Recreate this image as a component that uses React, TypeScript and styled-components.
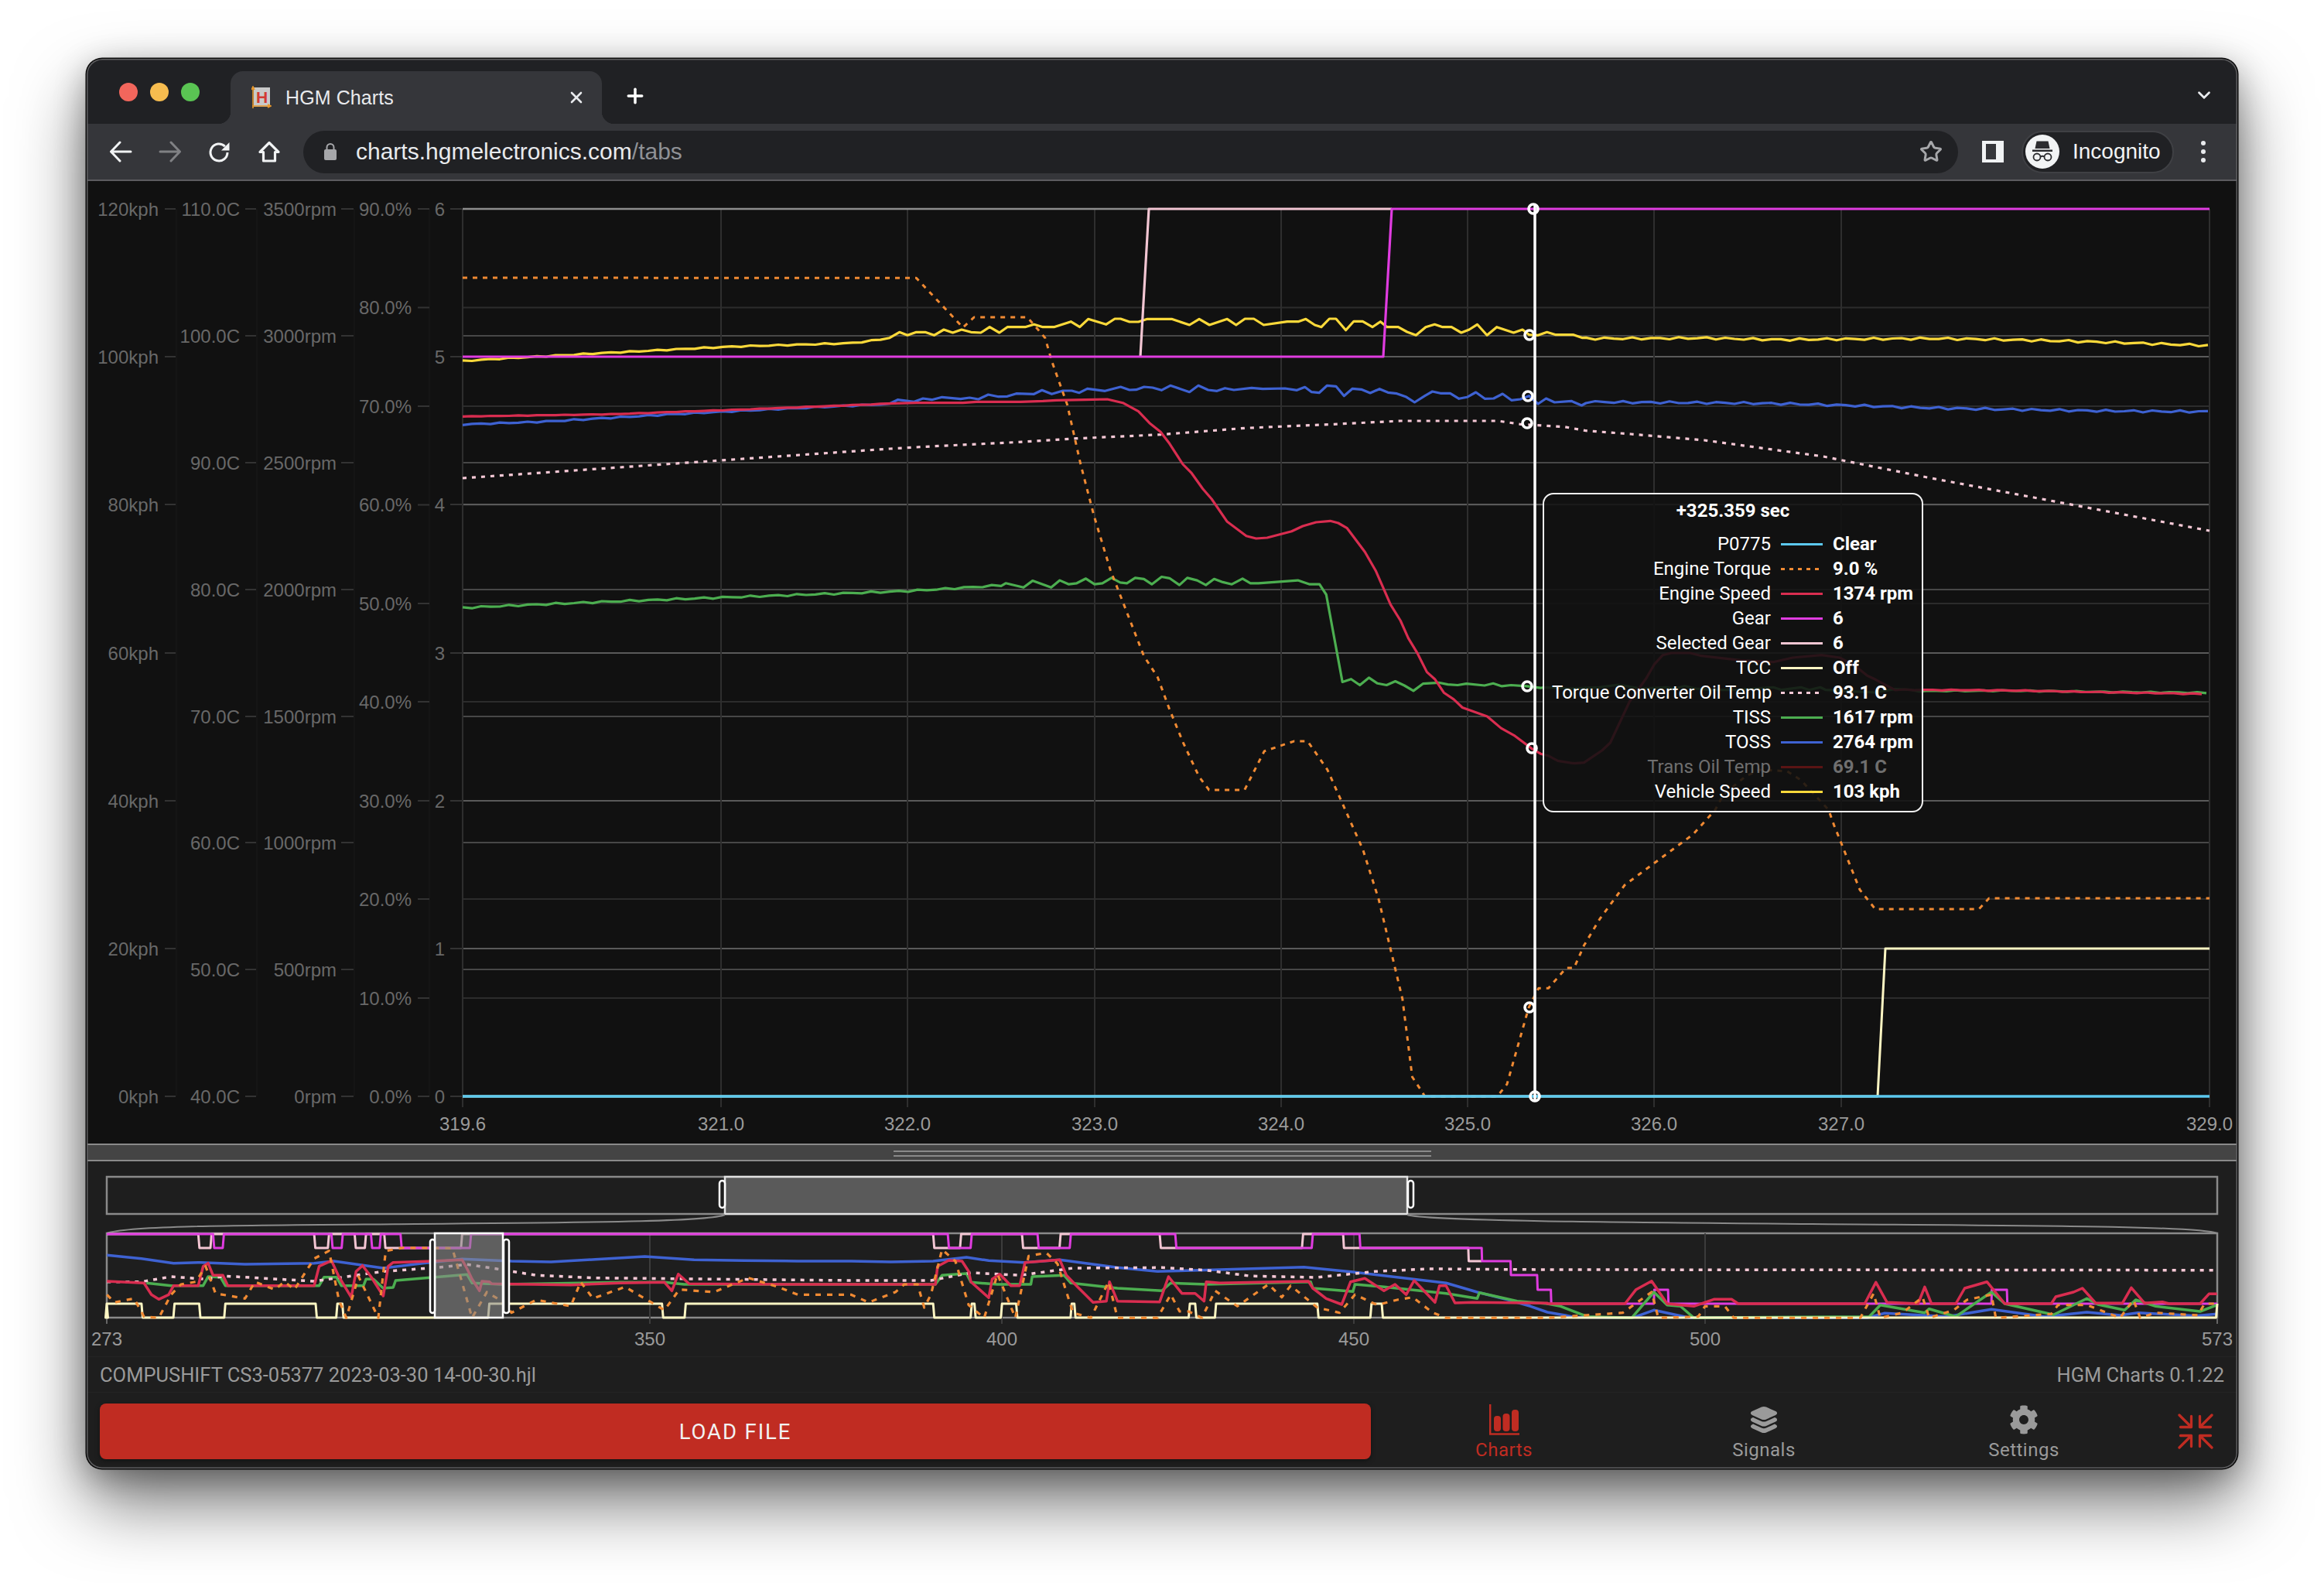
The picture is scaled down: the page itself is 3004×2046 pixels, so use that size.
import React from 'react'
import styled, { createGlobalStyle } from 'styled-components'
import { ChevronDown, Plus, Star, X } from 'lucide-react'
import { FaCog } from 'react-icons/fa'
import { IoLayers } from 'react-icons/io5'

type Pt = number[]

const COLORS = {
  p0775: '#5cc8ee',
  torque: '#f08a33',
  engine: '#d92d50',
  gear: '#e03ce0',
  selected: '#f3c6d3',
  tcc: '#fdf6c3',
  oilTemp: '#f6c9d6',
  tiss: '#4cae50',
  toss: '#3e62d2',
  trans: '#5a1414',
  speed: '#fbd93a',
  red: '#c02c22'
}

const GlobalStyle = createGlobalStyle`
  html, body {
    margin: 0;
    background: #fff;
  }
  body {
    width: 3004px;
    height: 2046px;
    overflow: hidden;
    font-family: Roboto, sans-serif;
  }
`

const Page = styled.div`
  padding: 76px 0 0 112px;
`

const Window = styled.div`
  position: relative;
  width: 2780px;
  height: 1822px;
  display: flex;
  flex-direction: column;
  border-radius: 20px;
  overflow: hidden;
  background: #1e1e1e;
  box-shadow: 0 0 0 1.5px #0a0a0a, 0 44px 90px rgba(0, 0, 0, 0.55), 0 10px 40px rgba(0, 0, 0, 0.3);

  &::after {
    content: '';
    position: absolute;
    inset: 0;
    border-radius: 20px;
    box-shadow: inset 0 0 0 1.5px #5e5e60;
    pointer-events: none;
  }
`

const TabStrip = styled.div`
  height: 84px;
  flex: none;
  display: flex;
  align-items: flex-end;
  padding: 0 32px 0 42px;
  background: #202124;
`

const Lights = styled.div`
  display: flex;
  gap: 16px;
  align-self: flex-start;
  margin: 31px 40px 0 0;
`

const Light = styled.span<{ $color: string }>`
  width: 24px;
  height: 24px;
  border-radius: 50%;
  background: ${(p) => p.$color};
`

const Tab = styled.div`
  position: relative;
  width: 480px;
  height: 68px;
  display: flex;
  align-items: center;
  padding: 0 21px 0 27px;
  box-sizing: border-box;
  border-radius: 16px 16px 0 0;
  background: #35363a;
  color: #e8eaed;

  &::before,
  &::after {
    content: '';
    position: absolute;
    bottom: 0;
    width: 16px;
    height: 16px;
  }
  &::before {
    left: -16px;
    background: radial-gradient(circle at 0 0, transparent 16px, #35363a 16.5px);
  }
  &::after {
    right: -16px;
    background: radial-gradient(circle at 100% 0, transparent 16px, #35363a 16.5px);
  }
`

const TabTitle = styled.span`
  margin-left: 18px;
  font: 25px 'Liberation Sans', sans-serif;
  letter-spacing: 0.1px;
`

const TabClose = styled.span`
  margin-left: auto;
  display: flex;
`

const NewTab = styled.span`
  display: flex;
  align-self: center;
  margin: 12px 0 0 28px;
  color: #fff;
`

const TabMenu = styled.span`
  display: flex;
  align-self: center;
  margin: 10px -2px 0 auto;
  color: #e8eaed;
`

const Toolbar = styled.div`
  height: 74px;
  flex: none;
  display: flex;
  align-items: center;
  box-sizing: border-box;
  padding-left: 28px;
  background: #35363a;
  border-bottom: 2px solid #5c5c60;
`

const NavButton = styled.span<{ $dim?: boolean }>`
  width: 32px;
  height: 32px;
  margin-right: 32px;
  display: flex;
  align-items: center;
  justify-content: center;
  color: ${(p) => (p.$dim ? '#808184' : '#f1f3f4')};
`

const UrlPill = styled.div`
  width: 2139px;
  height: 55px;
  margin-left: -4px;
  flex: none;
  display: flex;
  align-items: center;
  box-sizing: border-box;
  padding: 0 20px 0 27px;
  border-radius: 28px;
  background: #202124;
`

const UrlText = styled.span`
  margin-left: 25px;
  font: 30px 'Liberation Sans', sans-serif;
  color: #e8eaed;
  em {
    font-style: normal;
    color: #8f9196;
  }
`

const UrlStar = styled.span`
  margin-left: auto;
  display: flex;
  color: #a6a7aa;
`

const SidePanel = styled.span`
  width: 28px;
  height: 28px;
  margin-left: 31px;
  box-sizing: border-box;
  border: solid #f1f3f4;
  border-width: 4px 10px 4px 5px;
  background: #35363a;
`

const Profile = styled.div`
  width: 197px;
  height: 55px;
  margin-left: 23px;
  display: flex;
  align-items: center;
  box-sizing: border-box;
  padding-left: 3px;
  border: 2px solid #3f4044;
  border-radius: 28px;
  background: #202124;
  color: #f1f3f4;
  font: 28px 'Liberation Sans', sans-serif;
`

const Avatar = styled.span`
  width: 44px;
  height: 44px;
  margin-right: 17px;
  flex: none;
  display: flex;
  border-radius: 50%;
  background: #f1f3f4;
`

const Kebab = styled.span`
  margin-left: 34px;
  display: flex;
`

const ChartPanel = styled.div`
  position: relative;
  height: 1244px;
  flex: none;
  background: #111;
  font-family: 'Liberation Sans', sans-serif;
`

const Drawing = styled.svg`
  display: block;
`

const AxisLabel = styled.text<{ $light?: boolean }>`
  font: 24px 'Liberation Sans', sans-serif;
  fill: ${(p) => (p.$light ? '#9a9a9a' : '#686868')};
`

const Tooltip = styled.div`
  position: absolute;
  left: 1882px;
  top: 403px;
  width: 492px;
  height: 413px;
  box-sizing: border-box;
  padding: 5px 0 0 10px;
  border: 2px solid #f2f2f2;
  border-radius: 14px;
  background: rgba(17, 17, 17, 0.88);
  color: #fff;
  font: 24px/32px Roboto, sans-serif;
`

const TooltipTitle = styled.div`
  margin: 0 0 11px -10px;
  text-align: center;
  font-weight: 700;
`

const TooltipGrid = styled.div`
  display: grid;
  grid-template-columns: 283px 54px auto;
  column-gap: 13px;
  align-items: center;
`

const RowLabel = styled.span<{ $dim?: boolean }>`
  text-align: right;
  white-space: nowrap;
  color: ${(p) => (p.$dim ? '#6f6f6f' : '#fff')};
`

const RowValue = styled.span<{ $dim?: boolean }>`
  font-weight: 700;
  white-space: nowrap;
  color: ${(p) => (p.$dim ? '#6f6f6f' : '#fff')};
`

const Swatch = styled.span<{ $color: string; $dotted?: boolean }>`
  height: 3px;
  background: ${(p) =>
    p.$dotted ? `repeating-linear-gradient(90deg, ${p.$color} 0 5px, transparent 5px 11px)` : p.$color};
`

const Splitter = styled.div`
  height: 23px;
  flex: none;
  box-sizing: border-box;
  display: flex;
  flex-direction: column;
  align-items: center;
  padding: 7px 0 0 0;
  gap: 4px;
  background: #444;
  border-top: 2px solid #8a8a8a;
  border-bottom: 2px solid #8a8a8a;
`

const Grip = styled.span`
  width: 695px;
  height: 2px;
  background: #8a8a8a;
`

const Navigator = styled.div`
  height: 252px;
  flex: none;
  background: #1e1e1e;
`

const InfoRow = styled.div`
  height: 47px;
  flex: none;
  display: flex;
  align-items: center;
  justify-content: space-between;
  box-sizing: border-box;
  padding: 0 17px;
  border-top: 1px solid #242424;
  border-bottom: 1px solid #242424;
  color: #9a9a9a;
  font: 25.5px Roboto, sans-serif;
`

const Footer = styled.div`
  flex: 1;
  display: flex;
  padding-left: 17px;
`

const LoadButton = styled.button`
  width: 1643px;
  height: 72px;
  margin: 14px 4px 0 0;
  flex: none;
  border: 0;
  border-radius: 8px;
  background: ${COLORS.red};
  box-shadow: 0 2px 6px rgba(0, 0, 0, 0.4);
  color: #f2f2f2;
  font: 400 27.5px Roboto, sans-serif;
  letter-spacing: 1.9px;
`

const NavTab = styled.div<{ $active?: boolean }>`
  width: 336px;
  padding-top: 15px;
  display: flex;
  flex-direction: column;
  align-items: center;
  color: ${(p) => (p.$active ? COLORS.red : '#9a9a9a')};
  font: 24px/28px Roboto, sans-serif;
  letter-spacing: 0.5px;
`

const NavTabIcon = styled.span`
  height: 40px;
  margin-bottom: 5px;
  display: flex;
  align-items: center;
`

const FullscreenToggle = styled.span`
  width: 108px;
  padding-top: 27px;
  display: flex;
  justify-content: center;
  color: ${COLORS.red};
`

// crops used to trace the curves off the reference, mapped back to page pixels
const crop = (sx: number, sy: number, ox: number, oy: number) => (pts: Pt[]) =>
  pts.map(([x, y]) => [x / sx + ox, y / sy + oy])
const z3 = crop(2.8, 3, 1960, 620)
const z4 = crop(1.568, 3, 100, 1440)
const z5 = crop(1.742, 3, 1100, 1440)
const z6 = crop(1.742, 3, 2000, 1440)
const z9 = crop(1.742, 3, 1150, 240)
const z10 = crop(1.96, 2.178, 1300, 740)

const line = (pts: Pt[]) => pts.map(([x, y]) => `${x.toFixed(1)},${y.toFixed(1)}`).join(' ')

// sampled signal with a little sensor noise between anchor points
const noisy = (anchors: Pt[], amp: number, seed: number): Pt[] => {
  const out: Pt[] = []
  let seg = 0
  for (let x = anchors[0][0]; x <= anchors[anchors.length - 1][0]; x += 12) {
    while (seg < anchors.length - 2 && x > anchors[seg + 1][0]) seg++
    const [x0, y0] = anchors[seg]
    const [x1, y1] = anchors[seg + 1]
    const y = y0 + ((y1 - y0) * (x - x0)) / (x1 - x0)
    out.push([x, y + (amp * (Math.sin(x * 0.53 + seed) + Math.sin(x * 1.37 + seed * 2))) / 2])
  }
  return out
}

const speedLine = [
  ...noisy([[598, 467], [650, 464], [800, 456], [950, 448], [1100, 443], [1148, 437]], 1.6, 1),
  ...z9([
    [0, 590], [22, 568], [40, 580], [60, 568], [80, 568], [100, 580], [122, 558], [142, 570], [162, 558], [183, 568],
    [205, 570], [225, 548], [247, 570], [265, 548], [305, 548], [325, 538], [345, 548], [370, 548], [408, 527],
    [428, 548], [447, 517], [487, 538], [507, 516], [520, 516], [540, 528], [560, 528], [580, 517], [635, 517],
    [675, 540], [697, 517], [720, 540], [760, 517], [780, 540], [800, 516], [820, 516], [842, 540], [895, 527],
    [920, 527], [937, 517], [957, 540], [972, 548], [990, 516], [1005, 516], [1027, 560], [1045, 526], [1065, 526],
    [1087, 548], [1105, 527], [1120, 548], [1145, 548], [1165, 567], [1185, 580], [1207, 548], [1227, 538],
    [1245, 548], [1265, 548], [1287, 570], [1305, 558], [1323, 538], [1345, 580], [1367, 548], [1405, 570],
    [1425, 558], [1440, 578], [1460, 580], [1480, 568], [1500, 578], [1540, 578], [1560, 590]
  ]),
  ...noisy([[2050, 436], [2200, 436], [2300, 439], [2500, 439], [2680, 442], [2856, 446]], 3, 2)
]

const tossLine = [
  ...noisy([[598, 549], [700, 545], [860, 535], [1000, 528], [1148, 522]], 1.8, 3),
  ...z9([
    [0, 845], [18, 830], [55, 838], [75, 825], [95, 830], [118, 820], [160, 827], [180, 822], [200, 828], [222, 810],
    [245, 818], [265, 817], [285, 806], [325, 808], [343, 793], [365, 808], [390, 795], [410, 795], [427, 803],
    [445, 787], [485, 796], [520, 780], [540, 792], [555, 791], [573, 780], [592, 783], [612, 793], [632, 775],
    [675, 800], [695, 775], [717, 792], [737, 796], [755, 785], [775, 792], [815, 784], [840, 788], [890, 786],
    [917, 793], [935, 781], [950, 800], [967, 803], [985, 775], [1005, 778], [1023, 815], [1042, 787], [1062, 790],
    [1082, 804], [1103, 788], [1122, 802], [1142, 806], [1162, 818], [1182, 840], [1205, 815], [1222, 798],
    [1240, 805], [1262, 805], [1282, 826], [1300, 820], [1320, 801], [1340, 826], [1360, 825], [1380, 807],
    [1400, 832], [1420, 828], [1440, 815], [1460, 846], [1478, 825], [1497, 840], [1535, 835], [1558, 852]
  ]),
  ...noisy([[2050, 520], [2108, 521], [2300, 523], [2490, 527], [2856, 531]], 3, 4)
]

const engineLine = [
  ...noisy([[598, 538], [800, 535], [1000, 528], [1148, 522]], 0.6, 5),
  ...z9([
    [60, 842], [165, 842], [195, 838], [295, 838], [345, 835], [375, 832], [440, 830], [490, 828], [525, 842],
    [560, 875], [585, 920], [610, 955], [630, 1000], [660, 1080], [680, 1115], [705, 1175], [725, 1215], [760, 1303],
    [803, 1358], [825, 1368], [850, 1365], [905, 1340], [930, 1320], [960, 1305], [992, 1300], [1010, 1308],
    [1030, 1328], [1070, 1420], [1095, 1495]
  ]),
  ...z10([
    [975, 90], [1000, 135], [1020, 185], [1042, 225], [1067, 280], [1087, 300], [1110, 338], [1135, 357], [1157, 380],
    [1220, 405], [1255, 438], [1290, 460], [1332, 495], [1355, 510]
  ]),
  ...z3([
    [115, 1070], [150, 1090], [210, 1100], [245, 1097], [310, 1050], [340, 1020], [410, 860], [470, 770], [500, 715],
    [530, 680], [560, 672], [630, 672], [670, 683], [810, 700], [930, 707], [1000, 690], [1105, 680], [1170, 690],
    [1230, 725], [1270, 760], [1300, 775], [1370, 815]
  ]),
  ...noisy([[2450, 892], [2600, 893], [2720, 895], [2856, 897]], 1.2, 6)
]

const tissLine = [
  ...noisy([[598, 786], [860, 776], [1173, 763], [1300, 755]], 2.4, 7),
  ...z10([
    [0, 30], [45, 42], [68, 23], [115, 42], [137, 22], [160, 33], [180, 30], [203, 17], [225, 33], [245, 30], [268, 15],
    [290, 28], [307, 30], [328, 15], [350, 18], [370, 33], [395, 12], [415, 16], [440, 35], [460, 15], [485, 22],
    [507, 35], [528, 18], [550, 27], [573, 33], [600, 17], [620, 30], [640, 30], [740, 22], [770, 33], [795, 33],
    [812, 62], [853, 308], [875, 300], [897, 317], [920, 296], [942, 312], [965, 317], [987, 306], [1010, 318],
    [1033, 333], [1057, 313], [1097, 310], [1120, 315], [1145, 317], [1167, 313], [1213, 318], [1235, 312], [1257, 320],
    [1280, 317], [1320, 320], [1355, 325]
  ]),
  ...z3([
    [100, 805], [200, 810], [300, 805], [370, 795], [450, 810], [545, 805], [570, 810], [610, 800], [650, 810],
    [700, 815], [800, 815], [930, 805], [960, 815], [1030, 805], [1060, 815], [1100, 805], [1120, 815], [1200, 820],
    [1300, 825], [1370, 812], [1430, 815]
  ]),
  ...noisy([[2480, 893], [2600, 893], [2720, 895], [2856, 896]], 1.4, 8)
]

const torqueLine = [
  [598, 359],
  ...z9([
    [60, 358], [165, 550], [190, 510], [310, 510], [350, 590], [365, 680], [400, 850], [430, 1080], [460, 1280], [497, 1490]
  ]),
  ...z10([
    [350, 235], [385, 295], [415, 385], [450, 480], [490, 575], [515, 612], [605, 612], [655, 503], [730, 475], [765, 475],
    [815, 555], [855, 655], [905, 780], [945, 920], [975, 1060], [1005, 1200], [1030, 1420], [1055, 1462], [1062, 1475],
    [1245, 1475], [1270, 1440], [1325, 1225], [1350, 1170], [1375, 1170], [1420, 1113], [1440, 1113], [1465, 1050],
    [1505, 975], [1568, 880]
  ]),
  ...z3([
    [640, 1375], [720, 1280], [750, 1220], [830, 1150], [880, 1125], [980, 1130], [1030, 1165], [1130, 1280], [1150, 1340],
    [1165, 1380]
  ]),
  [2404, 1150], [2424, 1175], [2558, 1175], [2571, 1161], [2856, 1161]
]

const oilTempLine = [
  [598, 618],
  ...z9([
    [0, 1020], [100, 1010], [280, 995], [420, 980], [610, 965], [800, 940], [1000, 925], [1150, 912], [1370, 912], [1420, 925],
    [1520, 935], [1568, 950]
  ]),
  [2108, 561], [2203, 569], [2357, 590], [2491, 617], [2682, 653], [2856, 686]
]

const mini = {
  toss: [
    ...z4([[60, 547], [130, 560], [195, 578], [250, 575], [340, 582], [480, 578], [520, 570], [620, 597], [700, 578], [780, 562], [880, 570], [960, 573], [1050, 563], [1150, 552], [1250, 565], [1350, 568], [1460, 570]]),
    ...z5([[0, 570], [90, 573], [185, 570], [260, 555], [310, 568], [390, 575], [470, 565], [600, 595], [690, 610], [830, 603], [1020, 593], [1130, 612], [1340, 655], [1410, 690], [1480, 720], [1530, 745], [1568, 768]]),
    ...z6([[40, 780], [60, 787], [190, 790], [200, 785], [240, 760], [320, 790], [720, 790], [730, 785], [760, 772], [900, 785], [1000, 757], [1120, 785], [1215, 768], [1290, 780], [1330, 770], [1460, 782], [1508, 775]])
  ],
  tiss: [
    ...z4([[140, 655], [190, 665], [255, 665], [265, 630], [290, 632], [300, 665], [490, 665], [500, 632], [525, 632], [535, 665], [580, 665], [585, 640], [600, 640], [620, 675], [640, 672], [645, 645], [790, 622], [800, 655], [860, 660], [1100, 652], [1190, 652], [1230, 660], [1460, 660]]),
    ...z5([[0, 660], [190, 660], [205, 625], [260, 618], [270, 652], [330, 660], [405, 660], [408, 630], [480, 625], [495, 655], [600, 675], [700, 685], [720, 655], [800, 660], [1035, 650], [1040, 675], [1130, 688], [1135, 660], [1200, 670], [1340, 695], [1410, 715], [1415, 692], [1500, 725], [1568, 735]]),
    ...z6([[30, 745], [90, 785], [190, 790], [240, 690], [270, 740], [300, 745], [330, 790], [725, 785], [750, 740], [850, 770], [860, 755], [920, 785], [1000, 690], [1030, 735], [1140, 778], [1215, 715], [1240, 738], [1300, 760], [1325, 720], [1370, 745], [1470, 765], [1508, 740]])
  ],
  engine: [
    ...z4([[60, 648], [135, 655], [150, 700], [165, 718], [185, 700], [195, 665], [245, 665], [255, 590], [265, 578], [275, 625], [295, 625], [305, 665], [480, 665], [490, 590], [515, 568], [530, 630], [555, 710], [565, 610], [578, 587], [595, 630], [620, 705], [630, 590], [640, 575], [720, 570], [780, 565], [790, 600], [800, 640], [815, 685], [820, 648], [835, 650], [840, 658], [1000, 662], [1100, 655], [1190, 652], [1205, 685], [1218, 620], [1240, 658], [1460, 660]]),
    ...z5([[0, 660], [190, 660], [195, 590], [220, 567], [250, 570], [265, 610], [270, 650], [310, 712], [318, 640], [335, 620], [360, 665], [380, 665], [392, 575], [470, 565], [485, 625], [510, 670], [545, 730], [575, 725], [582, 650], [600, 725], [695, 728], [715, 630], [745, 695], [775, 695], [795, 725], [800, 650], [830, 655], [1030, 648], [1040, 675], [1070, 715], [1105, 738], [1125, 650], [1157, 637], [1200, 685], [1225, 660], [1250, 700], [1268, 645], [1315, 730], [1325, 665], [1340, 665], [1360, 732], [1400, 730], [1568, 733]]),
    ...z6([[0, 735], [175, 735], [200, 680], [235, 647], [270, 735], [330, 745], [375, 718], [415, 718], [430, 735], [715, 735], [740, 652], [765, 730], [835, 735], [850, 670], [865, 735], [920, 735], [940, 675], [960, 665], [990, 650], [1030, 735], [1135, 735], [1145, 708], [1185, 690], [1205, 675], [1235, 733], [1295, 733], [1315, 673], [1345, 733], [1385, 728], [1400, 735], [1470, 735], [1490, 697], [1508, 697]])
  ],
  oilTemp: [
    ...z4([[60, 650], [130, 650], [190, 630], [260, 640], [300, 628], [480, 648], [620, 610], [730, 595], [790, 583], [850, 600], [930, 625], [1050, 635], [1460, 643]]),
    ...z5([[0, 645], [180, 645], [270, 615], [380, 625], [500, 597], [700, 595], [800, 605], [900, 628], [1050, 633], [1180, 610], [1300, 600], [1568, 603]]),
    ...z6([[0, 603], [1508, 605]])
  ],
  torque: [
    ...z4([[60, 700], [75, 730], [115, 715], [135, 785], [165, 790], [190, 700], [210, 660], [240, 650], [260, 590], [280, 695], [340, 715], [360, 650], [400, 680], [420, 650], [440, 680], [480, 560], [510, 530], [530, 720], [545, 790], [570, 630], [610, 790], [625, 530], [660, 518], [760, 520], [800, 790], [830, 690], [860, 725], [880, 770], [930, 720], [1000, 745], [1020, 650], [1045, 715], [1110, 670], [1150, 715], [1190, 760], [1220, 680], [1290, 690], [1360, 635], [1420, 670], [1460, 700]]),
    ...z5([[0, 700], [40, 730], [100, 690], [120, 660], [150, 660], [165, 750], [180, 700], [205, 525], [235, 570], [265, 740], [300, 790], [330, 620], [370, 790], [400, 550], [440, 538], [465, 580], [500, 770], [540, 790], [580, 650], [600, 790], [690, 790], [720, 700], [740, 765], [760, 765], [790, 790], [820, 685], [870, 745], [940, 660], [970, 710], [990, 665], [1050, 750], [1100, 770], [1135, 700], [1185, 740], [1230, 720], [1265, 710], [1310, 770], [1340, 790], [1568, 790]]),
    ...z6([[0, 790], [170, 770], [235, 690], [250, 790], [340, 785], [355, 745], [400, 745], [420, 790], [705, 790], [735, 695], [750, 790], [800, 770], [845, 710], [860, 790], [915, 760], [945, 720], [1000, 700], [1010, 790], [1135, 775], [1150, 740], [1215, 740], [1290, 790], [1320, 720], [1335, 790], [1370, 770], [1465, 780], [1480, 735], [1508, 735]])
  ]
}

// square wave between a high and a low level, lows given as [from, to] in page x
const square = (x0: number, x1: number, hi: number, lo: number, lows: number[][], slant = 1.5): Pt[] => {
  const out: Pt[] = [[x0, hi]]
  lows.forEach(([a, b]) => {
    out.push([a, hi], [a + slant, lo], [b - slant, lo], [b, hi])
  })
  out.push([x1, hi])
  return out
}
const xs4 = (a: number) => a / 1.568 + 100
const xs5 = (a: number) => a / 1.742 + 1100
const xs6 = (a: number) => a / 1.742 + 2000

const L6 = 1595
const L5 = 1613
const L4 = 1630
const L3 = 1648
const L2 = 1667
const L1 = 1685
const TOP = 1594
const BOTTOM = 1703

const miniGear: Pt[] = [
  ...square(138, xs5(1145), L6, L5, [
    [xs4(275), xs4(297)], [xs4(515), xs4(538)], [xs4(595), xs4(615)], [xs4(655), xs4(798)],
    [xs5(218), xs5(272)], [xs5(420), xs5(495)], [xs5(730), xs5(1040)]
  ]),
  [xs5(1147), L5], [xs5(1420), L5], [xs5(1421), L4], [xs5(1485), L4], [xs5(1486), L3], [xs5(1545), L3], [xs5(1546), L2],
  [xs6(8), L2], [xs6(9), L1], [xs6(180), L1], [xs6(240), L1], [xs6(241), L2], [xs6(272), L2], [xs6(273), L1],
  [xs6(1000), L1], [xs6(1001), L2], [xs6(1035), L2], [xs6(1036), L1], [2866, L1]
]

const miniSelected: Pt[] = square(138, xs5(1108), L6, L5, [
  [xs4(245), xs4(272)], [xs4(480), xs4(510)], [xs4(562), xs4(585)], [xs4(622), xs4(780)],
  [xs5(185), xs5(248)], [xs5(385), xs5(472)], [xs5(695), xs5(1018)]
]).concat([[xs5(1110), L5], [xs5(1390), L5], [xs5(1391), L4], [xs5(1420), L4]])

const miniTcc: Pt[] = square(138, 2866, L1, BOTTOM, [
  [138, 138], [xs4(130), xs4(197)], [xs4(247), xs4(300)], [xs4(483), xs4(527)], [xs4(537), xs4(835)],
  [xs4(1185), xs4(1233)], [xs5(185), xs5(272)], [xs5(278), xs5(340)], [xs5(372), xs5(497)], [xs5(503), xs5(763)],
  [xs5(775), xs5(822)], [xs5(1050), xs5(1172)], [xs5(1195), 2866]
])

const HGrid = ({ ys, x1, stroke }: { ys: number[]; x1?: number; stroke: string }) => (
  <g stroke={stroke} strokeWidth="2">
    {ys.map((y) => (
      <line key={y} x1={x1 ?? 598} x2="2856" y1={y} y2={y} />
    ))}
  </g>
)

const AxisColumn = ({
  labels,
  textX,
  tick,
  grid
}: {
  labels: [number, string][]
  textX: number
  tick: [number, number]
  grid: string
}) => (
  <g>
    {labels.map(([y, text]) => (
      <g key={y}>
        <AxisLabel x={textX} y={y + 8.5} textAnchor="end">
          {text}
        </AxisLabel>
        <line x1={tick[0]} x2={tick[1]} y1={y} y2={y} stroke={grid} strokeWidth="2" />
      </g>
    ))}
  </g>
)

const gearY = [270, 461, 652, 844, 1035, 1226, 1417]
const pctY = [270, 397.5, 525, 652.5, 780, 907, 1035, 1162, 1290, 1417]
const rpmY = [270, 434, 598, 762, 926, 1089, 1253, 1417]
const timeTicks: [number, string][] = [
  [598, '319.6'], [932, '321.0'], [1173, '322.0'], [1415, '323.0'], [1656, '324.0'], [1897, '325.0'], [2138, '326.0'], [2380, '327.0'], [2856, '329.0']
]

const MainChart = () => (
  <Drawing width="2780" height="1244" viewBox="112 234 2780 1244">
    <g stroke="#151515" strokeWidth="2">
      {[228, 332, 458, 555].map((x) => (
        <line key={x} x1={x} x2={x} y1="270" y2="1417" />
      ))}
    </g>
    <HGrid ys={pctY} stroke="#2c2c2c" />
    <HGrid ys={rpmY} stroke="#474747" />
    <HGrid ys={gearY} stroke="#5a5a5a" />
    <g stroke="#2e2e2e" strokeWidth="2">
      {timeTicks.map(([x]) => (
        <line key={x} x1={x} x2={x} y1="270" y2="1431" />
      ))}
    </g>
    <AxisColumn
      textX={205}
      tick={[213, 227]}
      grid="#333"
      labels={[[270, '120kph'], [461, '100kph'], [652, '80kph'], [844, '60kph'], [1035, '40kph'], [1226, '20kph'], [1417, '0kph']]}
    />
    <AxisColumn
      textX={310}
      tick={[317, 331]}
      grid="#333"
      labels={[[270, '110.0C'], [434, '100.0C'], [598, '90.0C'], [762, '80.0C'], [926, '70.0C'], [1089, '60.0C'], [1253, '50.0C'], [1417, '40.0C']]}
    />
    <AxisColumn
      textX={435}
      tick={[441, 457]}
      grid="#333"
      labels={[[270, '3500rpm'], [434, '3000rpm'], [598, '2500rpm'], [762, '2000rpm'], [926, '1500rpm'], [1089, '1000rpm'], [1253, '500rpm'], [1417, '0rpm']]}
    />
    <AxisColumn
      textX={532}
      tick={[540, 555]}
      grid="#333"
      labels={[[270, '90.0%'], [397.5, '80.0%'], [525, '70.0%'], [652.5, '60.0%'], [780, '50.0%'], [907, '40.0%'], [1035, '30.0%'], [1162, '20.0%'], [1290, '10.0%'], [1417, '0.0%']]}
    />
    <AxisColumn
      textX={575}
      tick={[582, 597]}
      grid="#333"
      labels={[[270, '6'], [461, '5'], [652, '4'], [844, '3'], [1035, '2'], [1226, '1'], [1417, '0']]}
    />
    {timeTicks.map(([x, text]) => (
      <AxisLabel key={x} $light x={x} y="1461" textAnchor={x === 2856 ? 'end' : 'middle'} dx={x === 2856 ? 30 : 0}>
        {text}
      </AxisLabel>
    ))}
    <line x1="598" x2="1485" y1="270" y2="270" stroke="#8d8d8d" strokeWidth="2.5" />
    <g fill="none" strokeLinejoin="round">
      <polyline points={line(speedLine)} stroke={COLORS.speed} strokeWidth="3.2" />
      <polyline points={line(tossLine)} stroke={COLORS.toss} strokeWidth="3.2" />
      <polyline points={line(tissLine)} stroke={COLORS.tiss} strokeWidth="3.2" />
      <polyline points={line(oilTempLine)} stroke={COLORS.oilTemp} strokeWidth="3.2" strokeDasharray="5 7" />
      <polyline points={line(torqueLine)} stroke={COLORS.torque} strokeWidth="3" strokeDasharray="6 7" />
      <polyline points="1474,461 1485,270 1799,270" stroke={COLORS.selected} strokeWidth="3.2" />
      <polyline points="598,461 1788,461 1799,270 2856,270" stroke={COLORS.gear} strokeWidth="3.2" />
      <polyline points="598,1417 2427,1417 2437,1226 2856,1226" stroke={COLORS.tcc} strokeWidth="3" />
      <polyline points={line(engineLine)} stroke={COLORS.engine} strokeWidth="3.2" />
      <line x1="598" x2="2856" y1="1417" y2="1417" stroke={COLORS.p0775} strokeWidth="3.4" />
    </g>
    <line x1="1984" x2="1984" y1="264" y2="1424" stroke="#fff" strokeWidth="3.5" />
    <g fill="none" stroke="#fff" strokeWidth="3.6">
      {[[1982, 270], [1977, 433], [1975, 512], [1974, 547], [1974, 887], [1980, 967], [1977, 1302], [1984, 1417]].map(([x, y]) => (
        <circle key={y} cx={x} cy={y} r="6" />
      ))}
    </g>
  </Drawing>
)

const NavLabel = ({ x, text }: { x: number; text: string }) => (
  <AxisLabel $light x={x} y="1739" textAnchor="middle">
    {text}
  </AxisLabel>
)

const OverviewChart = () => (
  <Drawing width="2780" height="252" viewBox="112 1501 2780 252">
    <rect x="138" y="1521" width="2728" height="48" fill="#1e1e1e" stroke="#8a8a8a" strokeWidth="2.5" />
    <rect x="937" y="1521" width="882" height="48" fill="#5a5a5a" stroke="#e2e2e2" strokeWidth="2.5" />
    <rect x="930" y="1526" width="7" height="35" rx="3.5" fill="#1e1e1e" stroke="#fff" strokeWidth="2.5" />
    <rect x="1820" y="1526" width="7" height="35" rx="3.5" fill="#1e1e1e" stroke="#fff" strokeWidth="2.5" />
    <g fill="none" stroke="#8a8a8a" strokeWidth="2">
      <path d="M138 1594C165 1584 300 1584 537 1582C800 1580 920 1578 937 1570" />
      <path d="M1819 1570C1840 1578 2100 1580 2342 1582C2600 1584 2840 1584 2866 1594" />
      <rect x="138" y="1594" width="2728" height="109" strokeWidth="2.5" />
    </g>
    <g stroke="#3c3c3c" strokeWidth="2">
      {[840, 1295, 1750, 2204].map((x) => (
        <line key={x} x1={x} x2={x} y1="1594" y2="1711" />
      ))}
    </g>
    <g stroke="#666" strokeWidth="2">
      <line x1="138" x2="138" y1="1703" y2="1711" />
      <line x1="2866" x2="2866" y1="1703" y2="1711" />
    </g>
    <g fill="none" strokeLinejoin="round">
      <polyline points={line(miniSelected)} stroke={COLORS.selected} strokeWidth="3" />
      <polyline points={line(miniGear)} stroke={COLORS.gear} strokeWidth="3" />
      <polyline points={line(mini.toss)} stroke={COLORS.toss} strokeWidth="3.5" />
      <polyline points={line(mini.tiss)} stroke={COLORS.tiss} strokeWidth="3.5" />
      <polyline points={line(mini.oilTemp)} stroke={COLORS.oilTemp} strokeWidth="3.5" strokeDasharray="5 7" />
      <polyline points={line(miniTcc)} stroke={COLORS.tcc} strokeWidth="3" />
      <polyline points={line(mini.engine)} stroke={COLORS.engine} strokeWidth="3.5" />
      <polyline points={line(mini.torque)} stroke={COLORS.torque} strokeWidth="3.2" strokeDasharray="7 8" />
    </g>
    <rect x="562" y={TOP} width="88" height={BOTTOM - TOP} fill="#8a8a8a" fillOpacity="0.6" stroke="#fff" strokeWidth="2.5" />
    <rect x="556" y="1602" width="6" height="95" rx="3" fill="#1e1e1e" stroke="#fff" strokeWidth="2.5" />
    <rect x="651" y="1602" width="7" height="95" rx="3" fill="#1e1e1e" stroke="#fff" strokeWidth="2.5" />
    <NavLabel x={138} text="273" />
    <NavLabel x={840} text="350" />
    <NavLabel x={1295} text="400" />
    <NavLabel x={1750} text="450" />
    <NavLabel x={2204} text="500" />
    <NavLabel x={2866} text="573" />
  </Drawing>
)

const readouts = [
  { label: 'P0775', value: 'Clear', color: COLORS.p0775 },
  { label: 'Engine Torque', value: '9.0 %', color: COLORS.torque, dotted: true },
  { label: 'Engine Speed', value: '1374 rpm', color: COLORS.engine },
  { label: 'Gear', value: '6', color: COLORS.gear },
  { label: 'Selected Gear', value: '6', color: COLORS.selected },
  { label: 'TCC', value: 'Off', color: COLORS.tcc },
  { label: 'Torque Converter Oil Temp', value: '93.1 C', color: COLORS.oilTemp, dotted: true },
  { label: 'TISS', value: '1617 rpm', color: COLORS.tiss },
  { label: 'TOSS', value: '2764 rpm', color: COLORS.toss },
  { label: 'Trans Oil Temp', value: '69.1 C', color: COLORS.trans, dim: true },
  { label: 'Vehicle Speed', value: '103 kph', color: COLORS.speed }
]

const Favicon = () => (
  <svg width="26" height="30" viewBox="0 0 26 30">
    <rect x="3" y="2" width="21" height="25" fill="#c9c9c9" />
    <text x="13.5" y="22" textAnchor="middle" fontFamily="Liberation Sans" fontWeight="700" fontSize="21" fill="#d23a34">
      H
    </text>
    <path d="M2 1v28M0 5l2-4 2 4M1 26h24M21 24l4 2-4 2" fill="none" stroke="#e8972a" strokeWidth="1.6" />
  </svg>
)

const BackIcon = () => (
  <svg width="30" height="28" viewBox="0 0 30 28" fill="none" stroke="currentColor" strokeWidth="3" strokeLinecap="round" strokeLinejoin="round">
    <path d="M28 14H3M14 2L2.500 14L14 26" />
  </svg>
)

const ForwardIcon = () => (
  <svg width="30" height="28" viewBox="0 0 30 28" fill="none" stroke="currentColor" strokeWidth="3" strokeLinecap="round" strokeLinejoin="round">
    <path d="M2 14H27M16 2L27.500 14L16 26" />
  </svg>
)

const ReloadIcon = () => (
  <svg width="30" height="30" viewBox="0 0 30 30">
    <path d="M25 16a11 11 0 1 1-3.200-7.800" fill="none" stroke="currentColor" strokeWidth="3" />
    <path d="M27.500 3v10.500H17z" fill="currentColor" />
  </svg>
)

const HomeIcon = () => (
  <svg width="30" height="30" viewBox="0 0 30 30">
    <path d="M15 3.500L3 15.500H7.500V27H22.500V15.500H27Z" fill="none" stroke="currentColor" strokeWidth="3.200" strokeLinejoin="round" />
  </svg>
)

const LockIcon = () => (
  <svg width="16" height="22" viewBox="0 0 16 22">
    <rect x="0" y="8" width="16" height="14" rx="2" fill="#a6a7aa" />
    <path d="M3.500 9V5.500a4.500 4.500 0 0 1 9 0V9" fill="none" stroke="#a6a7aa" strokeWidth="2" />
  </svg>
)

const IncognitoIcon = () => (
  <svg width="44" height="44" viewBox="0 0 44 44">
    <path d="M14.500 8.500L29.500 8.500L31.500 18H12.500Z" fill="#2b2c2f" />
    <rect x="9" y="19.500" width="26" height="2.500" fill="#2b2c2f" />
    <g fill="none" stroke="#2b2c2f" strokeWidth="1.800">
      <circle cx="15" cy="29" r="4.500" />
      <circle cx="29" cy="29" r="4.500" />
      <path d="M19.500 28.500Q22 27 24.500 28.500" />
    </g>
  </svg>
)

const KebabIcon = () => (
  <svg width="8" height="30" viewBox="0 0 8 30">
    <circle cx="4" cy="4" r="3" fill="#e8eaed" />
    <circle cx="4" cy="15" r="3" fill="#e8eaed" />
    <circle cx="4" cy="26" r="3" fill="#e8eaed" />
  </svg>
)

const ChartsIcon = () => (
  <svg width="39" height="40" viewBox="0 0 39 40">
    <path d="M1.200 0V38.500H39" fill="none" stroke="currentColor" strokeWidth="2.400" />
    <rect x="6" y="15" width="9" height="20" rx="4" fill="currentColor" />
    <rect x="17.500" y="12" width="9" height="23" rx="4" fill="currentColor" />
    <rect x="29" y="7" width="9" height="28" rx="4" fill="currentColor" />
  </svg>
)

const CompressIcon = () => (
  <svg width="46" height="46" viewBox="0 0 46 46" fill="none" stroke="currentColor" strokeWidth="3.300" strokeLinecap="round" strokeLinejoin="round">
    <path d="M2 2L17 17M3.500 17.500H17.500V3.500" />
    <path d="M44 2L29 17M42.500 17.500H28.500V3.500" />
    <path d="M2 44L17 29M3.500 28.500H17.500V42.500" />
    <path d="M44 44L29 29M42.500 28.500H28.500V42.500" />
  </svg>
)

export default function App() {
  return (
    <Page>
      <GlobalStyle />
      <Window>
        <TabStrip>
          <Lights>
            <Light $color="#f2665c" />
            <Light $color="#f6bc4f" />
            <Light $color="#5ac453" />
          </Lights>
          <Tab>
            <Favicon />
            <TabTitle>HGM Charts</TabTitle>
            <TabClose>
              <X size={24} strokeWidth={2.6} />
            </TabClose>
          </Tab>
          <NewTab>
            <Plus size={30} strokeWidth={2.8} />
          </NewTab>
          <TabMenu>
            <ChevronDown size={26} strokeWidth={2.6} />
          </TabMenu>
        </TabStrip>
        <Toolbar>
          <NavButton>
            <BackIcon />
          </NavButton>
          <NavButton $dim>
            <ForwardIcon />
          </NavButton>
          <NavButton>
            <ReloadIcon />
          </NavButton>
          <NavButton>
            <HomeIcon />
          </NavButton>
          <UrlPill>
            <LockIcon />
            <UrlText>
              charts.hgmelectronics.com<em>/tabs</em>
            </UrlText>
            <UrlStar>
              <Star size={30} strokeWidth={2.4} />
            </UrlStar>
          </UrlPill>
          <SidePanel />
          <Profile>
            <Avatar>
              <IncognitoIcon />
            </Avatar>
            Incognito
          </Profile>
          <Kebab>
            <KebabIcon />
          </Kebab>
        </Toolbar>
        <ChartPanel>
          <MainChart />
          <Tooltip>
            <TooltipTitle>+325.359 sec</TooltipTitle>
            <TooltipGrid>
              {readouts.map((r) => (
                <React.Fragment key={r.label}>
                  <RowLabel $dim={r.dim}>{r.label}</RowLabel>
                  <Swatch $color={r.color} $dotted={r.dotted} />
                  <RowValue $dim={r.dim}>{r.value}</RowValue>
                </React.Fragment>
              ))}
            </TooltipGrid>
          </Tooltip>
        </ChartPanel>
        <Splitter>
          <Grip />
          <Grip />
        </Splitter>
        <Navigator>
          <OverviewChart />
        </Navigator>
        <InfoRow>
          <span>COMPUSHIFT CS3-05377 2023-03-30 14-00-30.hjl</span>
          <span>HGM Charts 0.1.22</span>
        </InfoRow>
        <Footer>
          <LoadButton>LOAD FILE</LoadButton>
          <NavTab $active>
            <NavTabIcon>
              <ChartsIcon />
            </NavTabIcon>
            Charts
          </NavTab>
          <NavTab>
            <NavTabIcon>
              <IoLayers size={42} />
            </NavTabIcon>
            Signals
          </NavTab>
          <NavTab>
            <NavTabIcon>
              <FaCog size={38} />
            </NavTabIcon>
            Settings
          </NavTab>
          <FullscreenToggle>
            <CompressIcon />
          </FullscreenToggle>
        </Footer>
      </Window>
    </Page>
  )
}
